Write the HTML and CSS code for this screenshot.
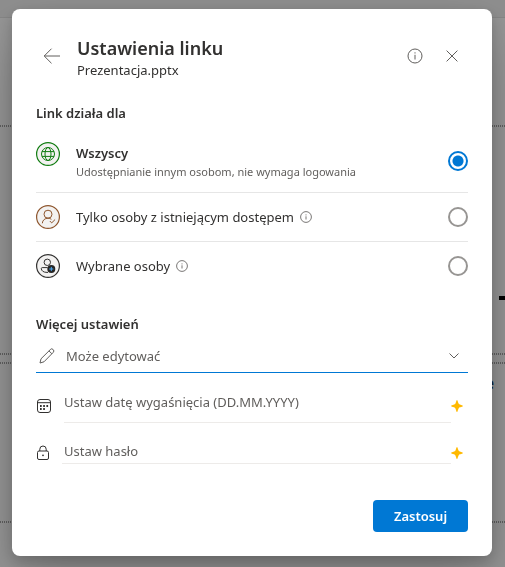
FILE: index.html
```html
<!DOCTYPE html>
<html lang="pl">
<head>
<meta charset="utf-8">
<meta name="viewport" content="width=device-width, initial-scale=1">
<title>Ustawienia linku</title>
<link rel="stylesheet" href="styles.css">
</head>
<body>
<div class="backdrop" aria-hidden="true">
  <div class="slide">
    <i class="guide guide-1"></i>
    <i class="guide guide-2"></i>
    <i class="guide guide-3"></i>
    <i class="guide guide-4"></i>
    <i class="mark"></i>
    <span class="letter">e</span>
  </div>
</div>
<main class="dialog" role="dialog" aria-labelledby="title">
  <header class="header">
    <button class="icon-button back" type="button" aria-label="Wstecz">
      <svg width="18" height="16" viewBox="0 0 18 16"><path d="M8.5.7 1.2 8l7.3 7.3M1.2 8H17"/></svg>
    </button>
    <div class="titles">
      <h1 id="title">Ustawienia linku</h1>
      <p>Prezentacja.pptx</p>
    </div>
    <button class="icon-button" type="button" aria-label="Informacje">
      <svg width="16" height="16" viewBox="0 0 16 16"><circle cx="8" cy="8" r="7"/><path d="M8 6.8v4.7M8 4.3v1.2"/></svg>
    </button>
    <button class="icon-button" type="button" aria-label="Zamknij">
      <svg width="12" height="12" viewBox="0 0 12 12"><path d="m.6.6 10.8 10.8M11.4.6.6 11.4"/></svg>
    </button>
  </header>

  <form class="form">
    <h2>Link działa dla</h2>
    <div class="options">
      <label class="option">
        <svg class="badge green" width="24" height="24" viewBox="0 0 24 24"><circle class="disc" cx="12" cy="12" r="11.4"/><circle cx="12" cy="12" r="6.5"/><ellipse cx="12" cy="12" rx="3" ry="6.5"/><path d="M6 9.6h12M6 14.4h12"/></svg>
        <span class="text"><strong>Wszyscy</strong><small>Udostępnianie innym osobom, nie wymaga logowania</small></span>
        <input type="radio" name="scope" checked>
      </label>
      <label class="option">
        <svg class="badge brown" width="24" height="24" viewBox="0 0 24 24"><circle class="disc" cx="12" cy="12" r="11.4"/><circle cx="12" cy="9.2" r="4"/><path d="M6.3 18.3c.2-3.2 2.7-5.100 5.700-5.100 1.300 0 2.500.4 3.400 1.100M13.800 16l1.900 1.900 3.400-3.400"/></svg>
        <span class="text"><span class="line">Tylko osoby z istniejącym dostępem
          <svg class="hint" width="12" height="12" viewBox="0 0 12 12"><circle cx="6" cy="6" r="5.4"/><path d="M6 5.3v3.2M6 3.4v1"/></svg></span></span>
        <input type="radio" name="scope">
      </label>
      <label class="option">
        <svg class="badge dark" width="24" height="24" viewBox="0 0 24 24"><circle class="disc" cx="12" cy="12" r="11.4"/><circle cx="11.3" cy="8.300" r="3.200"/><path d="M11.500 13.600H6.200c-.5 0-.9.4-.9.9 0 2.300 2.200 3.900 5.700 3.900h1"/><circle class="dot" cx="15.300" cy="15" r="4"/><path class="plus" d="M15.300 12.900v4.200M13.200 15h4.200"/></svg>
        <span class="text"><span class="line">Wybrane osoby
          <svg class="hint" width="12" height="12" viewBox="0 0 12 12"><circle cx="6" cy="6" r="5.4"/><path d="M6 5.3v3.2M6 3.4v1"/></svg></span></span>
        <input type="radio" name="scope">
      </label>
    </div>

    <h2>Więcej ustawień</h2>
    <div class="picker">
      <svg class="pencil" width="16" height="16" viewBox="0 0 16 16"><path d="m1 15 1-4.2L11.3 1.6a1.9 1.9 0 0 1 2.9 0 1.9 1.9 0 0 1 0 2.8L5 13.8 1 15ZM10 2.9l2.9 2.9"/></svg>
      <select aria-label="Uprawnienia"><option>Może edytować</option></select>
      <svg class="chevron" width="12" height="8" viewBox="0 0 12 8"><path d="m1.5 1.5 4.5 4.5 4.5-4.5"/></svg>
    </div>
    <div class="field date">
      <svg class="glyph" width="16" height="16" viewBox="0 0 16 16"><rect x="1.5" y="1.5" width="13" height="13" rx="2.5"/><path d="M1.5 4.7h13"/><path class="dots" d="M4 8h1.7M7.2 8h1.7M10.4 8h1.7M4 11h1.7M7.2 11h1.7"/></svg>
      <input type="text" aria-label="Data wygaśnięcia" placeholder="Ustaw datę wygaśnięcia (DD.MM.YYYY)">
      <svg class="star" width="12" height="12" viewBox="0 0 12 12"><path d="M6 0c.7 0 1.1 3.3 1.900 4.100S12 5.300 12 6s-3.300 1.100-4.100 1.900S6.700 12 6 12s-1.100-3.300-1.900-4.100S0 6.700 0 6s3.300-1.100 4.100-1.900S5.300 0 6 0Z"/></svg>
    </div>
    <div class="field password">
      <svg class="glyph" width="14" height="16" viewBox="0 0 14 16"><rect x="1.5" y="6" width="11" height="8.5" rx="1.5"/><path d="M3.8 6V4.2a3.200 3.200 0 0 1 6.400 0V6"/><circle class="hole" cx="7" cy="10.300" r=".9"/></svg>
      <input type="password" aria-label="Hasło" placeholder="Ustaw hasło">
      <svg class="star" width="12" height="12" viewBox="0 0 12 12"><path d="M6 0c.7 0 1.1 3.3 1.900 4.100S12 5.300 12 6s-3.300 1.100-4.100 1.900S6.700 12 6 12s-1.100-3.300-1.900-4.100S0 6.700 0 6s3.300-1.100 4.100-1.900S5.300 0 6 0Z"/></svg>
    </div>
    <button class="apply" type="button">Zastosuj</button>
  </form>
</main>
</body>
</html>
```
FILE: styles.css
```css
* { box-sizing: border-box; }

body {
  margin: 0;
  min-height: 100vh;
  padding: 9px 13px 11px 12px;
  background: #8f8f8f;
  color: #323130;
  font: 13px/20px "Noto Sans", "Open Sans", sans-serif;
}

h1, h2, p { margin: 0; }
svg { flex: none; fill: none; stroke: currentColor; }
button, input, select { font: inherit; }

/* Dimmed presentation behind the dialog */
.backdrop {
  position: fixed;
  inset: 0;
  z-index: -1;
  padding-top: 17px;
  overflow: hidden;
}
.slide {
  position: relative;
  height: 100%;
  background: #969696;
  border-top: 1px solid #868686;
}
.guide {
  position: absolute;
  left: 0;
  right: 0;
  height: 2px;
  background: repeating-linear-gradient(90deg, #606060 0 1px, transparent 1px 2px);
}
.guide-1 { top: 107px; }
.guide-2 { top: 335px; }
.guide-3 { top: 344px; }
.guide-4 { top: 503px; }
.mark {
  position: absolute;
  top: 278px;
  right: 0;
  width: 6px;
  height: 4px;
  background: #000;
}
.letter {
  position: absolute;
  top: 355px;
  right: 11px;
  color: #0b1f33;
  font-size: 16px;
  font-weight: 700;
}

.dialog {
  padding: 24px;
  background: #fff;
  border-radius: 8px;
  box-shadow: 0 26px 58px rgba(0, 0, 0, .22), 0 5px 14px rgba(0, 0, 0, .18);
}

.header {
  display: flex;
  align-items: center;
  height: 46px;
}
.icon-button {
  display: grid;
  place-items: center;
  width: 37px;
  height: 32px;
  padding: 0;
  border: 0;
  background: none;
  color: #605e5c;
}
.icon-button:last-child { margin-right: -2px; }
.back { width: 32px; }
.titles { flex: 1; padding: 2px 0 0 9px; }
h1 { font-size: 18px; font-weight: 600; line-height: 26px; }
.titles p { line-height: 18px; }

h2 {
  margin-top: 24px;
  font-size: 13px;
  font-weight: 600;
  line-height: 20px;
}

.options { margin-top: 7px; }
.option {
  display: flex;
  align-items: center;
  padding: 12px 0;
}
.option + .option { border-top: 1px solid #e6e6e6; }
.badge { align-self: flex-start; }
.green { color: #107c10; }
.brown { color: #8e562e; }
.dark { color: #323130; }
.disc { fill: #f3f2f1; stroke-width: 1.2; }
.dot { fill: #252423; stroke: none; }
.plus { stroke: #4aa8f0; }
.text { flex: 1; padding-left: 16px; }
.text strong, .text small { display: block; }
.text strong { font-weight: 600; line-height: 22px; }
.text small { color: #605e5c; font-size: 11px; line-height: 16px; }
.line {
  display: flex;
  align-items: center;
  gap: 6px;
}
.hint { color: #797775; }
input[type="radio"] {
  appearance: none;
  flex: none;
  width: 20px;
  height: 20px;
  margin: 0;
  border: 2px solid #979593;
  border-radius: 50%;
}
input[type="radio"]:checked {
  border-color: #0078d4;
  background: radial-gradient(circle, #0078d4 0 5px, transparent 6px);
}

.picker {
  display: grid;
  grid-template-columns: 30px 1fr 28px;
  align-items: center;
  height: 33px;
  margin-top: 6px;
  margin-bottom: 8px;
  border-bottom: 1px solid #0078d4;
  color: #605e5c;
}
.pencil { margin-left: 3px; }
.picker select {
  appearance: none;
  grid-column: 2 / 4;
  grid-row: 1;
  height: 32px;
  padding: 0;
  border: 0;
  background: none;
  color: inherit;
}
.chevron { grid-column: 3; grid-row: 1; margin-left: 8px; pointer-events: none; }

.field {
  display: grid;
  grid-template-columns: 28px 1fr 17px;
  align-items: center;
}
.field input {
  width: 100%;
  padding: 0;
  border: 0;
  border-bottom: 1px solid #edebe9;
  background: none;
  color: #323130;
}
.field input::placeholder { color: #605e5c; opacity: 1; }
.date { height: 42px; }
.date input { height: 42px; }
.date .glyph, .date .star { margin-top: 8px; }
.password { grid-template-columns: 26px 1fr 17px; height: 25px; margin-top: 16px; }
.password input { height: 25px; padding-left: 2px; }
.password .glyph, .password .star { margin-top: 2px; }
.star { fill: #ffb900; stroke: none; }
.hole { fill: currentColor; stroke: none; }
.dots { stroke-width: 2; }

.apply {
  display: block;
  min-width: 95px;
  height: 32px;
  margin: 36px 0 0 auto;
  border: 0;
  border-radius: 4px;
  background: #0078d4;
  color: #fff;
  font-weight: 600;
}
```
